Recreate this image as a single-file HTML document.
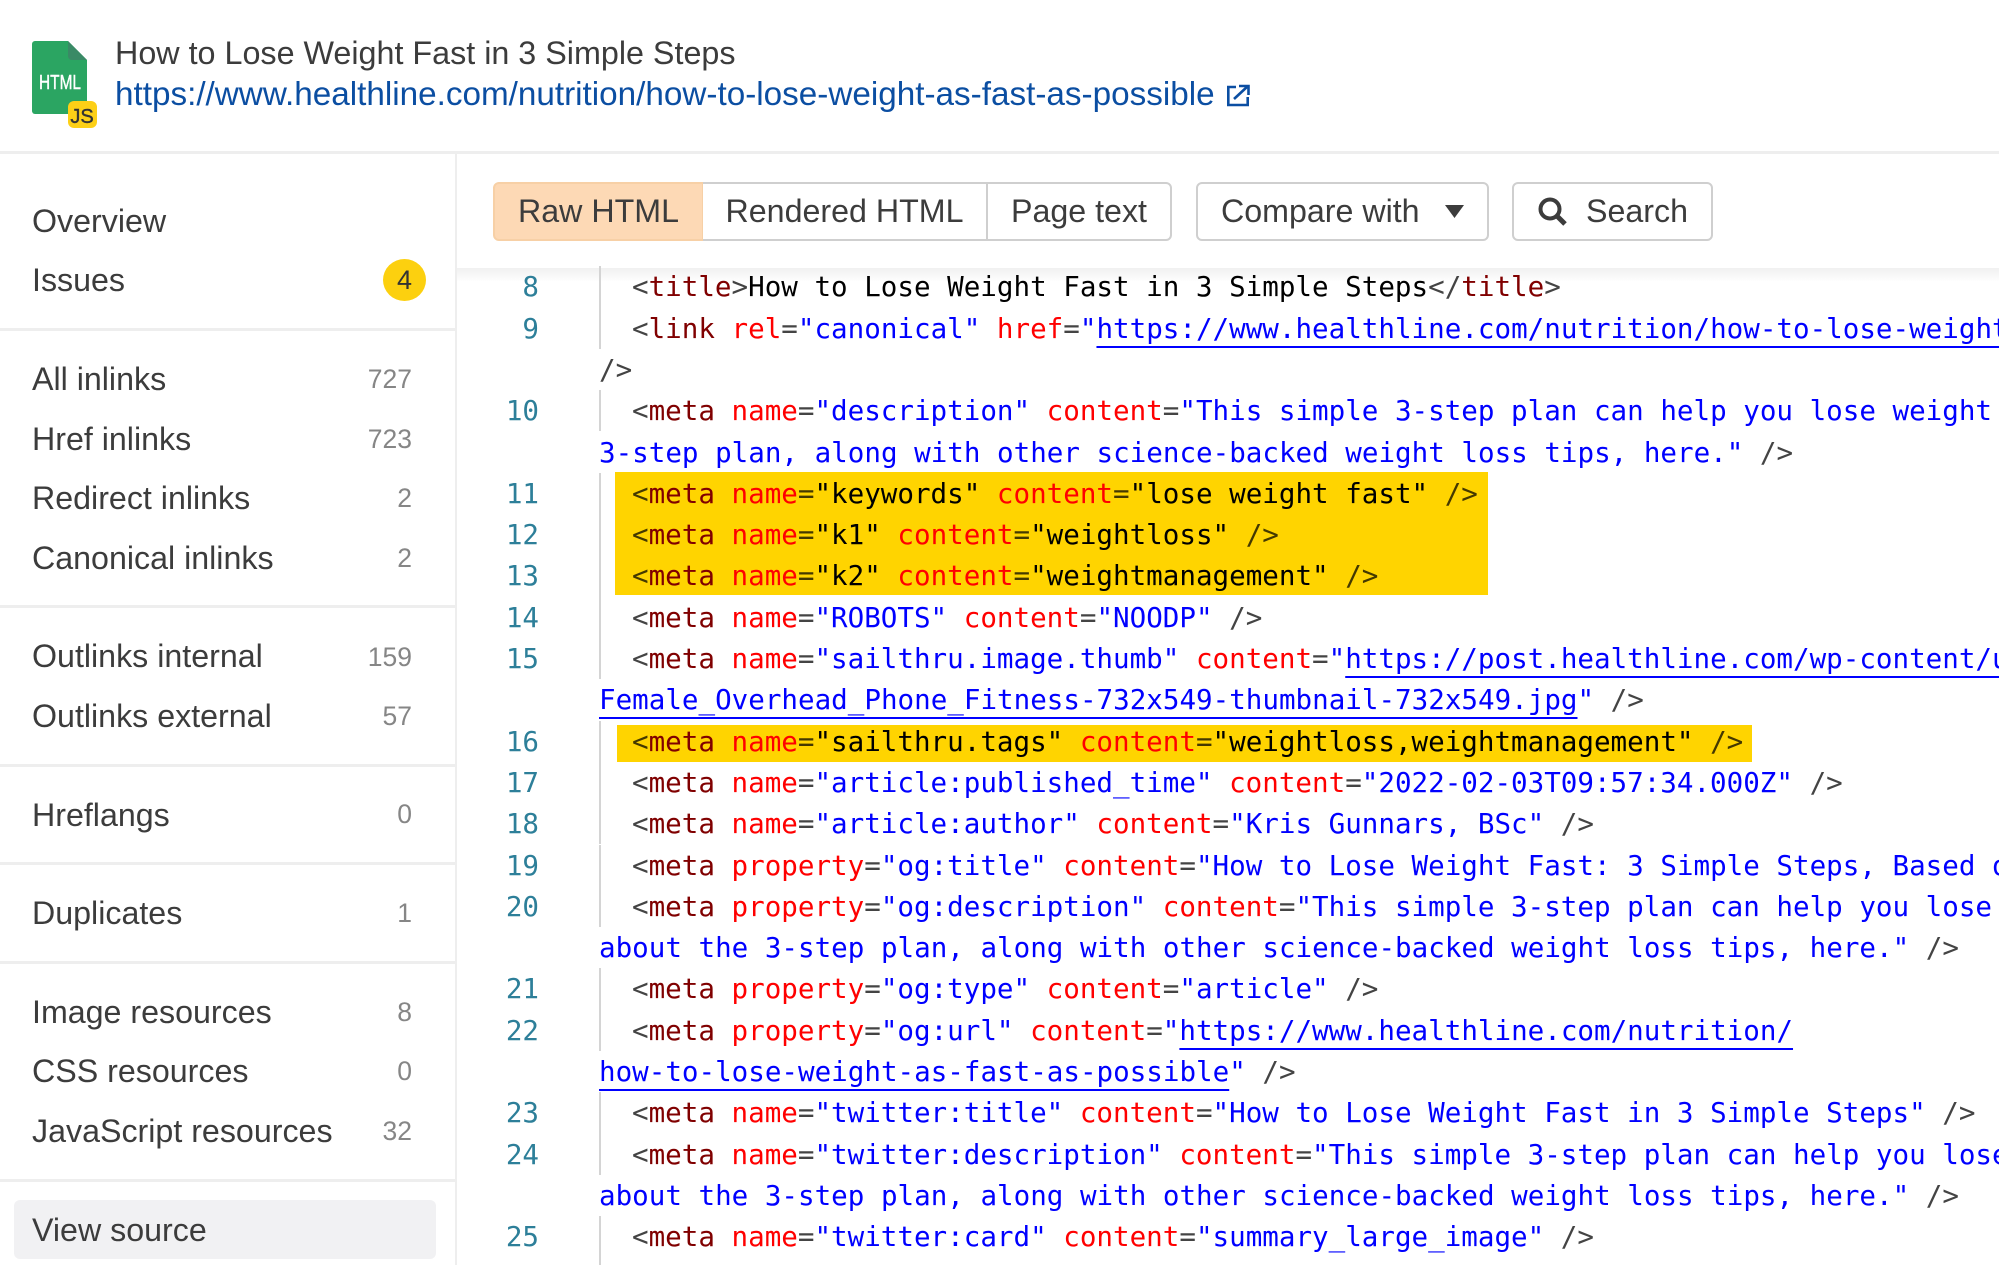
<!DOCTYPE html>
<html><head><meta charset="utf-8"><style>
html,body{margin:0;padding:0;background:#fff}
body{width:1999px;height:1265px;position:relative;overflow:hidden;font-family:"Liberation Sans",sans-serif;color:#333}
.abs,.s,.n,.r,.no,.g,.sep{position:absolute}
.s{left:32px;font-size:32.2px;line-height:44px;color:#3c3c3c;white-space:nowrap}
.n{right:1587px;font-size:26.5px;line-height:44px;color:#868686;text-align:right}
.sep{left:0;width:455px;height:3px;background:#eee}
.r{left:599px;margin-top:1px;font:27.55px/41.3px "DejaVu Sans Mono",monospace;white-space:pre;color:#444;width:1400px;overflow:hidden;height:41.3px}
.r.i{padding-left:33px;width:1367px}
.no{left:471px;margin-top:1px;width:68px;text-align:right;font:27.55px/41.3px "DejaVu Sans Mono",monospace;color:#2d7f99}
.g{left:599px;width:2px;height:41.3px;background:#d4d4d4}
b{font-weight:400}
.t{color:#800000}.a{color:#f00}.v{color:#00f}.k{color:#000}
u{color:#00f;text-decoration:underline;text-decoration-thickness:2px;text-underline-offset:7.5px;text-decoration-skip-ink:none}
.btn{position:absolute;top:182px;height:59px;box-sizing:border-box;font-size:32.2px;line-height:55px;text-align:center;color:#3c3c3c;border:2px solid #cfcfcf;background:#fff;white-space:nowrap}
</style></head><body>

<svg class="abs" style="left:30px;top:39px" width="70" height="92" viewBox="0 0 70 92">
<path d="M5 2H38L57 21V72a3 3 0 0 1-3 3H5a3 3 0 0 1-3-3V5a3 3 0 0 1 3-3Z" fill="#2ba562"/>
<path d="M38 2L57 21H42a4 4 0 0 1-4-4Z" fill="#3a8a66"/>
<text x="30" y="50" font-family="Liberation Sans" font-size="20" fill="#fff" stroke="#fff" stroke-width=".4" text-anchor="middle" textLength="42" lengthAdjust="spacingAndGlyphs">HTML</text>
<rect x="38" y="62" width="29" height="27" rx="6" fill="#fdd017"/>
<text x="52" y="84" font-family="Liberation Sans" font-size="20" fill="#333" stroke="#333" stroke-width=".4" text-anchor="middle">JS</text>
</svg>
<div class="abs" style="left:115px;top:31px;font-size:32.3px;line-height:44px;color:#3c3c3c;white-space:nowrap">How to Lose Weight Fast in 3 Simple Steps</div>
<div class="abs" style="left:115px;top:73px;font-size:33.25px;line-height:44px;color:#0b4ea2;white-space:nowrap">https://www.healthline.com/nutrition/how-to-lose-weight-as-fast-as-possible</div>
<svg class="abs" style="left:1224px;top:84px" width="26" height="24" viewBox="0 0 26 24" fill="none" stroke="#0b4ea2" stroke-width="2.6">
<path d="M12 3H4.300V21H23.700V13M10 15L24 2M15 2H24.500V11"/></svg>

<div class="abs" style="left:0;top:151px;width:1999px;height:3px;background:#eee"></div>
<div class="abs" style="left:455px;top:153px;width:2px;height:1112px;background:#eee"></div>

<div class="s" style="top:199px">Overview</div>
<div class="s" style="top:258px">Issues</div>
<div class="abs" style="left:383px;top:259px;width:43px;height:42px;border-radius:50%;background:#fcd00f;text-align:center;font-size:27px;line-height:42px;color:#333">4</div>
<div class="sep" style="top:328px"></div>
<div class="s" style="top:357px">All inlinks</div><div class="n" style="top:357px">727</div>
<div class="s" style="top:417px">Href inlinks</div><div class="n" style="top:417px">723</div>
<div class="s" style="top:476px">Redirect inlinks</div><div class="n" style="top:476px">2</div>
<div class="s" style="top:536px">Canonical inlinks</div><div class="n" style="top:536px">2</div>
<div class="sep" style="top:605px"></div>
<div class="s" style="top:634px">Outlinks internal</div><div class="n" style="top:635px">159</div>
<div class="s" style="top:694px">Outlinks external</div><div class="n" style="top:694px">57</div>
<div class="sep" style="top:764px"></div>
<div class="s" style="top:793px">Hreflangs</div><div class="n" style="top:792px">0</div>
<div class="sep" style="top:862px"></div>
<div class="s" style="top:891px">Duplicates</div><div class="n" style="top:891px">1</div>
<div class="sep" style="top:961px"></div>
<div class="s" style="top:990px">Image resources</div><div class="n" style="top:990px">8</div>
<div class="s" style="top:1049px">CSS resources</div><div class="n" style="top:1049px">0</div>
<div class="s" style="top:1109px">JavaScript resources</div><div class="n" style="top:1109px">32</div>
<div class="sep" style="top:1179px"></div>
<div class="abs" style="left:14px;top:1200px;width:422px;height:59px;background:#f1f1f3;border-radius:6px"></div>
<div class="s" style="top:1208px">View source</div>

<div class="btn" style="left:493px;width:211px;background:#fdd9b5;border-color:#f7d0a6;border-radius:6px 0 0 6px;">Raw HTML</div>
<div class="btn" style="left:703px;width:285px;border-left:0">Rendered HTML</div>
<div class="btn" style="left:986px;width:186px;border-radius:0 6px 6px 0">Page text</div>
<div class="btn" style="left:1196px;width:293px;border-radius:6px;text-align:left;padding-left:23px">Compare with</div>
<svg class="abs" style="left:1445px;top:205px" width="19" height="13" viewBox="0 0 19 13"><path d="M0 0H19L9.5 13Z" fill="#3c3c3c"/></svg>
<div class="btn" style="left:1512px;width:201px;border-radius:6px;text-align:left;padding-left:72px">Search</div>
<svg class="abs" style="left:1537px;top:196px" width="32" height="32" viewBox="0 0 32 32" fill="none" stroke="#3c3c3c"><circle cx="13" cy="13" r="9.5" stroke-width="4"/><path d="M20 20L28 28" stroke-width="5"/></svg>

<div class="abs" style="left:457px;top:268px;width:1542px;height:14px;background:linear-gradient(#f0f0f0,#fff)"></div>

<div class="g" style="top:266.3px"></div><div class="g" style="top:307.6px"></div>
<div class="g" style="top:390.2px"></div>
<div class="g" style="top:472.8px"></div><div class="g" style="top:514.1px"></div><div class="g" style="top:555.4px"></div><div class="g" style="top:596.7px"></div><div class="g" style="top:638px"></div>
<div class="g" style="top:720.6px"></div><div class="g" style="top:761.9px"></div><div class="g" style="top:803.2px"></div><div class="g" style="top:844.5px"></div><div class="g" style="top:885.8px"></div>
<div class="g" style="top:968.4px"></div><div class="g" style="top:1009.7px"></div>
<div class="g" style="top:1092.3px"></div><div class="g" style="top:1133.6px"></div>
<div class="g" style="top:1216.2px;height:49px"></div>

<div class="no" style="top:266.3px">8</div>
<div class="r i" style="top:266.3px">&lt;<b class="t">title</b>&gt;<b class="k">How to Lose Weight Fast in 3 Simple Steps</b>&lt;/<b class="t">title</b>&gt;</div>
<div class="no" style="top:307.6px">9</div>
<div class="r i" style="top:307.6px">&lt;<b class="t">link</b> <b class="a">rel</b>=<b class="v">"canonical"</b> <b class="a">href</b>=<b class="v">"</b><u>https://www.healthline.com/nutrition/how-to-lose-weight-as-fast-as-possible</u></div>
<div class="r" style="top:348.9px">/&gt;</div>
<div class="no" style="top:390.2px">10</div>
<div class="r i" style="top:390.2px">&lt;<b class="t">meta</b> <b class="a">name</b>=<b class="v">"description"</b> <b class="a">content</b>=<b class="v">"This simple 3-step plan can help you lose weight fast. Learn about the</b></div>
<div class="r" style="top:431.5px"><b class="v">3-step plan, along with other science-backed weight loss tips, here."</b> /&gt;</div>
<div class="no" style="top:472.8px">11</div>
<div class="r i" style="top:472.8px">&lt;<b class="t">meta</b> <b class="a">name</b>=<b class="v">"keywords"</b> <b class="a">content</b>=<b class="v">"lose weight fast"</b> /&gt;</div>
<div class="no" style="top:514.1px">12</div>
<div class="r i" style="top:514.1px">&lt;<b class="t">meta</b> <b class="a">name</b>=<b class="v">"k1"</b> <b class="a">content</b>=<b class="v">"weightloss"</b> /&gt;</div>
<div class="no" style="top:555.4px">13</div>
<div class="r i" style="top:555.4px">&lt;<b class="t">meta</b> <b class="a">name</b>=<b class="v">"k2"</b> <b class="a">content</b>=<b class="v">"weightmanagement"</b> /&gt;</div>
<div class="no" style="top:596.7px">14</div>
<div class="r i" style="top:596.7px">&lt;<b class="t">meta</b> <b class="a">name</b>=<b class="v">"ROBOTS"</b> <b class="a">content</b>=<b class="v">"NOODP"</b> /&gt;</div>
<div class="no" style="top:638px">15</div>
<div class="r i" style="top:638px">&lt;<b class="t">meta</b> <b class="a">name</b>=<b class="v">"sailthru.image.thumb"</b> <b class="a">content</b>=<b class="v">"</b><u>https://post.healthline.com/wp-content/uploads/2020/02/</u></div>
<div class="r" style="top:679.3px"><u>Female_Overhead_Phone_Fitness-732x549-thumbnail-732x549.jpg</u><b class="v">"</b> /&gt;</div>
<div class="no" style="top:720.6px">16</div>
<div class="r i" style="top:720.6px">&lt;<b class="t">meta</b> <b class="a">name</b>=<b class="v">"sailthru.tags"</b> <b class="a">content</b>=<b class="v">"weightloss,weightmanagement"</b> /&gt;</div>
<div class="no" style="top:761.9px">17</div>
<div class="r i" style="top:761.9px">&lt;<b class="t">meta</b> <b class="a">name</b>=<b class="v">"article:published_time"</b> <b class="a">content</b>=<b class="v">"2022-02-03T09:57:34.000Z"</b> /&gt;</div>
<div class="no" style="top:803.2px">18</div>
<div class="r i" style="top:803.2px">&lt;<b class="t">meta</b> <b class="a">name</b>=<b class="v">"article:author"</b> <b class="a">content</b>=<b class="v">"Kris Gunnars, BSc"</b> /&gt;</div>
<div class="no" style="top:844.5px">19</div>
<div class="r i" style="top:844.5px">&lt;<b class="t">meta</b> <b class="a">property</b>=<b class="v">"og:title"</b> <b class="a">content</b>=<b class="v">"How to Lose Weight Fast: 3 Simple Steps, Based on Science"</b> /&gt;</div>
<div class="no" style="top:885.8px">20</div>
<div class="r i" style="top:885.8px">&lt;<b class="t">meta</b> <b class="a">property</b>=<b class="v">"og:description"</b> <b class="a">content</b>=<b class="v">"This simple 3-step plan can help you lose weight fast. Learn more</b></div>
<div class="r" style="top:927.1px"><b class="v">about the 3-step plan, along with other science-backed weight loss tips, here."</b> /&gt;</div>
<div class="no" style="top:968.4px">21</div>
<div class="r i" style="top:968.4px">&lt;<b class="t">meta</b> <b class="a">property</b>=<b class="v">"og:type"</b> <b class="a">content</b>=<b class="v">"article"</b> /&gt;</div>
<div class="no" style="top:1009.7px">22</div>
<div class="r i" style="top:1009.7px">&lt;<b class="t">meta</b> <b class="a">property</b>=<b class="v">"og:url"</b> <b class="a">content</b>=<b class="v">"</b><u>https://www.healthline.com/nutrition/</u></div>
<div class="r" style="top:1051px"><u>how-to-lose-weight-as-fast-as-possible</u><b class="v">"</b> /&gt;</div>
<div class="no" style="top:1092.3px">23</div>
<div class="r i" style="top:1092.3px">&lt;<b class="t">meta</b> <b class="a">name</b>=<b class="v">"twitter:title"</b> <b class="a">content</b>=<b class="v">"How to Lose Weight Fast in 3 Simple Steps"</b> /&gt;</div>
<div class="no" style="top:1133.6px">24</div>
<div class="r i" style="top:1133.6px">&lt;<b class="t">meta</b> <b class="a">name</b>=<b class="v">"twitter:description"</b> <b class="a">content</b>=<b class="v">"This simple 3-step plan can help you lose weight fast. Learn more</b></div>
<div class="r" style="top:1174.9px"><b class="v">about the 3-step plan, along with other science-backed weight loss tips, here."</b> /&gt;</div>
<div class="no" style="top:1216.2px">25</div>
<div class="r i" style="top:1216.2px">&lt;<b class="t">meta</b> <b class="a">name</b>=<b class="v">"twitter:card"</b> <b class="a">content</b>=<b class="v">"summary_large_image"</b> /&gt;</div>

<div class="abs" style="left:615px;top:472px;width:873px;height:123px;background:#ffd400;mix-blend-mode:multiply"></div>
<div class="abs" style="left:617px;top:725px;width:1135px;height:37px;background:#ffd400;mix-blend-mode:multiply"></div>
</body></html>
